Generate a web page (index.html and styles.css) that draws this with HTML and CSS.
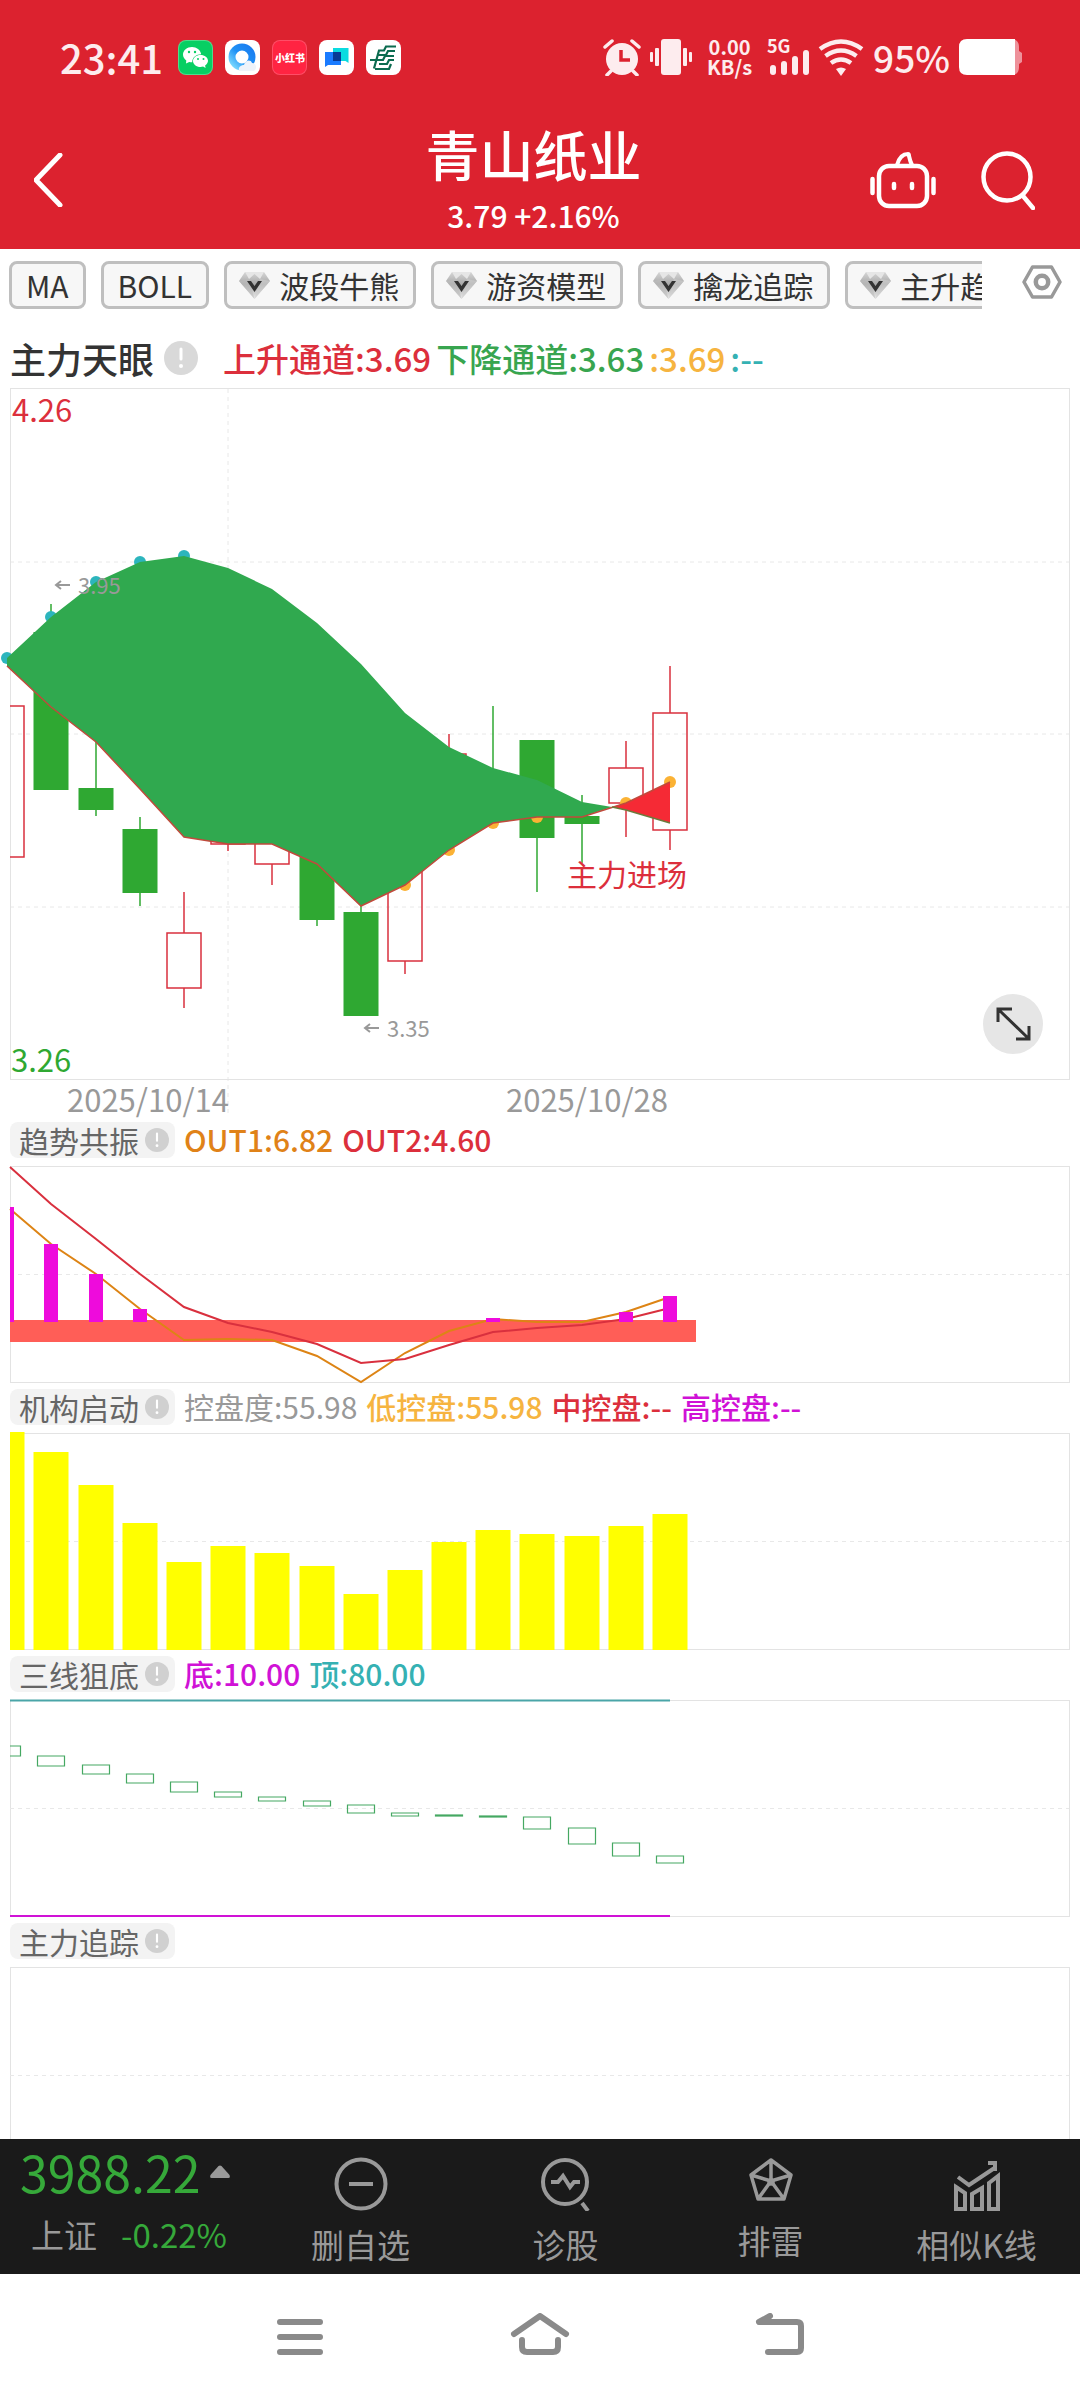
FILE: index.html
```html
<!DOCTYPE html>
<html lang="zh-CN">
<head>
<meta charset="utf-8">
<meta name="viewport" content="width=device-width, initial-scale=1">
<title>青山纸业</title>
<link rel="stylesheet" href="styles.css">
</head>
<body>
<svg class="defs" aria-hidden="true">
  <defs>
    <linearGradient id="gem-fill" x1="0" y1="0" x2="0" y2="1"><stop offset="0" stop-color="#d6d6d6"/><stop offset=".45" stop-color="#a9a9a9"/><stop offset="1" stop-color="#ececec"/></linearGradient>
    <linearGradient id="browser-ring" x1="0" y1="1" x2="1" y2="0"><stop offset="0" stop-color="#7fdcff"/><stop offset=".5" stop-color="#1e90f5"/><stop offset="1" stop-color="#1a7cf0"/></linearGradient>
    <symbol id="gem" viewBox="0 0 31 28">
      <path d="M6 1h19l6 9-15.500 18L0 10z" fill="url(#gem-fill)"/>
      <path d="M6 1h19l-4 7-5.500-5L10 8z" fill="#e6e6e6"/>
      <path d="M0 10l10-2 5.500 20z" fill="#bdbdbd" opacity=".6"/>
      <path d="M31 10l-10-2-5.500 20z" fill="#cfcfcf" opacity=".6"/>
      <path d="M8 10h4l3.500 5 3.500-5h4l-7.500 11z" fill="#333"/>
    </symbol>
    <symbol id="info" viewBox="0 0 34 34">
      <circle cx="17" cy="17" r="17" fill="currentColor"/>
      <path d="M17 8v10" stroke="#fff" stroke-width="3" stroke-linecap="round"/><circle cx="17" cy="25" r="2" fill="#fff"/>
    </symbol>
  </defs>
</svg>
<div class="app">
  <header class="top">
    <div class="status">
      <span class="clock">23:41</span>
      <div class="apps">
        <svg viewBox="0 0 35 35"><rect width="35" height="35" rx="8" fill="#4fdc8c"/><rect x="1" y="1" width="33" height="33" rx="7" fill="#07cf63"/><path d="M14 7c-5 0-9 3.400-9 7.600 0 2.500 1.300 4.500 3.300 5.900L8 23.500l3.200-1.600c1 .3 2 .4 3 .4 0-4.800 4-8 9-8-.8-4.300-4.600-7.300-9.200-7.300z" fill="#fff"/><path d="M22.500 15c-4.200 0-7.500 2.700-7.500 6s3.300 6 7.500 6c.9 0 1.800-.1 2.600-.4l2.500 1.300-.5-2.500c1.800-1.200 2.900-2.800 2.900-4.600 0-3.200-3.300-5.800-7.500-5.800z" fill="#fff"/><g fill="#07cf63"><circle cx="11" cy="12" r="1.200"/><circle cx="17" cy="12" r="1.200"/><circle cx="20" cy="19" r="1"/><circle cx="25.500" cy="19" r="1"/></g></svg>
        <svg viewBox="0 0 35 35"><rect width="35" height="35" rx="8" fill="#fff"/><circle cx="17" cy="17" r="10" fill="none" stroke="url(#browser-ring)" stroke-width="7"/><path d="M14 31c-1-4 2-6 5-6 1-5 7-6 8-2 5 0 5 6 2 8z" fill="#eef3fa"/></svg>
        <svg viewBox="0 0 35 35"><rect width="35" height="35" rx="8" fill="#ff4d67"/><rect x="1" y="1" width="33" height="33" rx="7" fill="#ff2442"/><text x="3" y="22" class="app-name">小红书</text></svg>
        <svg viewBox="0 0 35 35"><rect width="35" height="35" rx="8" fill="#fff"/><path d="M14 8h15.500v15l-3-2H14z" fill="#0adbe0"/><path d="M6 12h16v13H9l-3 2z" fill="#1a7bff"/><path d="M14 12h8v9h-8z" fill="#083a94"/></svg>
        <svg viewBox="0 0 35 35"><rect width="35" height="35" rx="8" fill="#fff"/><g fill="none" stroke="#0b6b4f" stroke-width="2.200"><path d="M30 6.500H20l-2 4h-5l-5 18M29 11h-7l-2 4h-8M4 20h13l2-4h9M28 20h-5l-2 4h-8M25 24l-2 5H9"/></g></svg>
      </div>
      <div class="signals">
        <svg width="38" height="37" viewBox="0 0 38 37"><circle cx="19" cy="20" r="16" fill="#fdecee"/><path d="M2 8l7-6M36 8l-7-6M8 32l-4 4M30 32l4 4" stroke="#fdecee" stroke-width="3.500" stroke-linecap="round"/><path d="M18 11v10h9" fill="none" stroke="#dc222f" stroke-width="3.500"/></svg>
        <svg width="42" height="36" viewBox="0 0 42 36" fill="#fdecee"><rect x="11" width="20" height="36" rx="3"/><rect x="5" y="9" width="4" height="18" rx="1"/><rect y="13" width="3" height="10" rx="1"/><rect x="33" y="9" width="4" height="18" rx="1"/><rect x="39" y="13" width="3" height="10" rx="1"/></svg>
        <span class="speed"><b>0.00</b><b>KB/s</b></span>
        <svg class="cell" width="42" height="36" viewBox="0 0 42 36" fill="#fdecee"><text x="0" y="14" class="net">5G</text><rect x="3" y="26" width="6" height="10" rx="3"/><rect x="14" y="22" width="6" height="14" rx="3"/><rect x="25" y="17" width="6" height="19" rx="3"/><rect x="36" y="11" width="6" height="25" rx="3"/></svg>
        <svg width="46" height="37" viewBox="0 0 46 37"><g fill="none" stroke="#fdecee" stroke-width="4.500"><path d="M2 10q21-15 42 0M7.500 17q15.500-11 31 0M13 24q10-7 20 0"/></g><path d="M18 30q5-3 10 0l-5 7z" fill="#fdecee"/></svg>
        <span class="percent">95%</span>
        <svg width="64" height="36" viewBox="0 0 64 36"><path d="M8 0h44q8 0 8 8v4l3 2v9l-3 2v3q0 8-8 8H8z" fill="#ee919a"/><path d="M8 0h48v36H8q-8 0-8-8V8q0-8 8-8z" fill="#fff"/></svg>
      </div>
    </div>
    <div class="titlebar">
      <button class="icon-btn back" aria-label="返回"><svg width="30" height="54" viewBox="0 0 30 54"><path d="M26 2L2 27l24 25" fill="none" stroke="#fff" stroke-width="5" stroke-linecap="round" stroke-linejoin="round"/></svg></button>
      <div class="heading">
        <h1>青山纸业</h1>
        <p>3.79 +2.16%</p>
      </div>
      <div class="tools">
        <button class="icon-btn" aria-label="助手"><svg width="66" height="58" viewBox="0 0 66 58" fill="none" stroke="#fff" stroke-width="4.500" stroke-linecap="round"><rect x="9" y="15" width="48" height="40" rx="10"/><path d="M2.500 28v14M63.500 28v14M24 33v4M42 33v4"/><path d="M27 14q3-11 11-11 1 0 1 2 1 5 3 9" stroke-width="4"/></svg></button>
        <button class="icon-btn" aria-label="搜索"><svg width="54" height="60" viewBox="0 0 54 60" fill="none" stroke="#fff" stroke-width="4.500" stroke-linecap="round"><circle cx="26" cy="27" r="23.500"/><path d="M42 46l10 12"/></svg></button>
      </div>
    </div>
  </header>

  <main class="content">
    <nav class="indicators">
      <div class="chips">
        <button class="chip">MA</button>
        <button class="chip">BOLL</button>
        <button class="chip"><svg><use href="#gem"/></svg>波段牛熊</button>
        <button class="chip"><svg><use href="#gem"/></svg>游资模型</button>
        <button class="chip"><svg><use href="#gem"/></svg>擒龙追踪</button>
        <button class="chip"><svg><use href="#gem"/></svg>主升趋势</button>
      </div>
      <button class="icon-btn settings" aria-label="设置"><svg width="40" height="34" viewBox="0 0 40 34" fill="none" stroke="#999" stroke-width="3.500"><path d="M10.500 2h19L38 17l-8.500 15h-19L2 17z" stroke-linejoin="round"/><circle cx="20" cy="17" r="6.200" stroke-width="4.500"/></svg></button>
    </nav>

    <section>
      <div class="main-head">
        <h2>主力天眼</h2>
        <svg class="info-lg"><use href="#info"/></svg>
        <span class="red">上升通道:3.69</span>
        <span class="green">下降通道:3.63</span>
        <span class="amber">:3.69</span>
        <span class="teal">:--</span>
      </div>
      <svg class="chart" viewBox="0 0 1080 734" id="price">
        <g class="grid"><path d="M10 174H1069M10 346H1069M10 519H1069M228 1V725"/></g>
        <rect class="frame" x="10.500" y="0.500" width="1059" height="691"/>
        <g class="plot"></g>
        <text x="12" y="34" class="axis up">4.26</text>
        <text x="11" y="684" class="axis down">3.26</text>
        <text x="78" y="206" class="mark">3.95</text>
        <text x="387" y="649" class="mark">3.35</text>
        <path class="arrow" d="M70 197H56m5-4l-5 4 5 4M379 640h-14m5-4l-5 4 5 4"/>
        <text x="567" y="498" class="signal">主力进场</text>
        <text x="67" y="724" class="axis date">2025/10/14</text>
        <text x="506" y="724" class="axis date">2025/10/28</text>
        <g class="expand"><circle cx="1013" cy="636" r="30" fill="#e6e6e6"/><path d="M998 634v-13h14M1016 651h13v-13M999 622l29 28" fill="none" stroke="#333" stroke-width="3"/></g>
      </svg>
    </section>

    <section class="sub">
      <div class="sub-head">
        <button class="pill">趋势共振<svg><use href="#info"/></svg></button>
        <span class="orange">OUT1:6.82</span><span class="red">OUT2:4.60</span>
      </div>
      <svg class="chart" viewBox="0 0 1080 220" id="trend"><rect class="frame" x="10.500" y="2.500" width="1059" height="216"/><path class="grid" d="M10 110.500H1069"/><g class="plot"></g></svg>
    </section>
    <section class="sub">
      <div class="sub-head">
        <button class="pill">机构启动<svg><use href="#info"/></svg></button>
        <span class="gray">控盘度:55.98</span><span class="amber">低控盘:55.98</span><span class="red">中控盘:--</span><span class="magenta">高控盘:--</span>
      </div>
      <svg class="chart" viewBox="0 0 1080 220" id="control"><rect class="frame" x="10.500" y="2.500" width="1059" height="216"/><path class="grid" d="M10 110.500H1069"/><g class="plot"></g></svg>
    </section>
    <section class="sub">
      <div class="sub-head">
        <button class="pill">三线狙底<svg><use href="#info"/></svg></button>
        <span class="magenta">底:10.00</span><span class="teal">顶:80.00</span>
      </div>
      <svg class="chart" viewBox="0 0 1080 220" id="bottom"><rect class="frame" x="10.500" y="2.500" width="1059" height="216"/><path class="grid" d="M10 110.500H1069"/><g class="plot"></g></svg>
    </section>
    <section class="sub">
      <div class="sub-head">
        <button class="pill">主力追踪<svg><use href="#info"/></svg></button>
      </div>
      <svg class="chart" viewBox="0 0 1080 220"><rect class="frame" x="10.500" y="2.500" width="1059" height="216"/><path class="grid" d="M10 110.500H1069"/></svg>
    </section>
  </main>

  <footer class="actions">
    <div class="index">
      <div class="index-value">3988.22<svg width="20" height="13" viewBox="0 0 20 13"><path d="M8.500 1q1.500-1 3 0l8 9q1 3-1 3h-17q-2 0-1-3z" fill="#999"/></svg></div>
      <div class="index-change"><span>上证</span><span class="down">-0.22%</span></div>
    </div>
    <button class="action"><svg width="54" height="54" viewBox="0 0 54 54" fill="none" stroke="#999" stroke-width="4"><circle cx="27" cy="27" r="24.500"/><path d="M15 27h24"/></svg>删自选</button>
    <button class="action"><svg width="54" height="54" viewBox="0 0 54 54" fill="none" stroke="#999" stroke-width="4"><circle cx="26" cy="25" r="22"/><path d="M12 25h7l5-6 7 11 4-5h6M43 46l6 8"/></svg>诊股</button>
    <button class="action"><svg width="54" height="50" viewBox="0 0 54 50" fill="none" stroke="#999" stroke-width="3.500" stroke-linejoin="round"><path d="M27 3L47 18l-7 24H14L7 18zM27 3v21L47 18M27 24l13 18M27 24L14 42M27 24L7 18"/><circle cx="27" cy="25" r="2"/></svg>排雷</button>
    <button class="action"><svg width="54" height="54" viewBox="0 0 54 54" fill="none" stroke="#999" stroke-width="4"><path d="M6 30l9 6v16H6zM22 37l10-6v21H22zM39 26l9-7v33h-9z"/><path d="M8 20l11 8 27-18M38 6h7v8"/></svg>相似K线</button>
  </footer>
  <nav class="system">
    <button aria-label="菜单"><svg width="60" height="48" viewBox="0 0 60 48"><path d="M10 9h40M10 24h40M10 39h40"/></svg></button>
    <button aria-label="主页"><svg width="60" height="48" viewBox="0 0 60 48"><path d="M4 21L30 3l26 18M12 27v7q0 5 5 5h26q5 0 5-5v-7"/></svg></button>
    <button aria-label="后退"><svg width="60" height="48" viewBox="0 0 60 48"><path d="M20 3L9 9h38q4 0 4 4v22q0 4-4 4H18"/></svg></button>
  </nav>
</div>
<script src="charts.js"></script>
</body>
</html>
```

FILE: styles.css
```css
* { box-sizing: border-box; }
body {
  margin: 0;
  background: #fff;
  color: #333;
  font-family: "Noto Sans CJK SC", "Noto Sans", sans-serif;
  font-size: 30px;
}
button {
  margin: 0;
  padding: 0;
  border: 0;
  background: none;
  color: inherit;
  font: inherit;
}
h1, h2, p { margin: 0; font-weight: 500; }
svg { display: block; flex: none; }
.defs { position: absolute; width: 0; height: 0; }

.app { display: flex; flex-direction: column; height: 100vh; }

.top { background: #dc222f; color: #fff; flex: none; }
.status {
  display: flex;
  align-items: center;
  height: 75px;
  padding: 39px 57px 0 60px;
  color: #fdecee;
}
.clock { font-size: 40px; line-height: 36px; font-weight: 500; width: 118px; }
.apps { display: flex; gap: 12px; }
.apps svg { width: 35px; height: 35px; }
.app-name { font-size: 10px; font-weight: 900; fill: #fff; }
.signals { display: flex; align-items: center; gap: 9px; margin-left: auto; }
.speed {
  display: flex;
  flex-direction: column;
  align-items: center;
  margin: 0 6px;
  font-size: 20px;
  line-height: 20px;
}
.cell { overflow: visible; }
.net { font-size: 18px; font-weight: 700; }
.percent { font-size: 37px; line-height: 36px; font-weight: 500; }

.titlebar {
  display: flex;
  justify-content: space-between;
  align-items: center;
  padding: 32px 45px 0 34px;
  height: 174px;
}
.icon-btn { display: block; }
.back { width: 163px; padding-top: 4px; }
.heading { text-align: center; padding-top: 4px; }
h1 { font-size: 54px; line-height: 70px; }
.heading p { font-size: 30px; line-height: 52px; }
.tools { display: flex; align-items: center; gap: 45px; padding-top: 4px; }

.content { flex: 1; min-height: 0; overflow-y: auto; scrollbar-width: none; }
.content::-webkit-scrollbar { display: none; }

.indicators { display: flex; padding: 12px 18px 0 9px; }
.chips { display: flex; flex: 1; min-width: 0; gap: 15px; overflow: hidden; }
.chip {
  display: flex;
  align-items: center;
  flex: none;
  gap: 9px;
  height: 48px;
  padding: 0 14px;
  border: 3px solid #bfbfbf;
  border-radius: 8px;
  background: #f7f7f7;
  line-height: 40px;
  white-space: nowrap;
}
.chip svg { width: 31px; height: 28px; margin-left: -2px; }
.settings { flex: none; margin-left: 40px; padding-bottom: 6px; }

.main-head {
  display: flex;
  align-items: center;
  height: 54px;
  margin: 22px 0 3px;
  padding-left: 10px;
  font-size: 33px;
  font-weight: 500;
  white-space: nowrap;
}
h2 { font-size: 36px; }
.info-lg { width: 34px; height: 34px; margin: 0 25px 0 10px; color: #d9d9d9; }
.main-head span { margin-right: 5px; }

.chart { width: 100%; height: auto; }
.frame { fill: none; stroke: #e3e3e3; }
.grid { fill: none; stroke: #e8e8e8; stroke-width: 1; stroke-dasharray: 4 4; }
.axis { font-size: 31px; }
.up, .signal { fill: #dc2f3c; }
.down { fill: #2fa832; color: #36a93a; }
.date { fill: #999; }
.mark { font-size: 22px; fill: #999; }
.arrow { fill: none; stroke: #999; stroke-width: 2; }
.signal { font-size: 30px; }

.sub { margin-bottom: 5px; }
.sub-head {
  display: flex;
  align-items: center;
  gap: 9px;
  height: 36px;
  margin-bottom: 6px;
  padding-left: 10px;
  line-height: 34px;
  font-weight: 500;
  white-space: nowrap;
}
.sub-head span { height: 36px; }
.pill {
  display: flex;
  align-items: center;
  gap: 6px;
  height: 36px;
  padding: 0 6px 0 9px;
  border-radius: 8px;
  background: #f3f3f3;
  color: #666;
  font-weight: 400;
}
.pill svg { width: 24px; height: 24px; color: #d0d0d0; }
.red { color: #dc2f3c; }
.green { color: #38a54f; }
.amber { color: #f6b440; }
.teal { color: #35b1b3; }
.orange { color: #e08218; }
.gray { color: #999; font-weight: 400; }
.magenta { color: #d012d6; }

.actions {
  display: grid;
  grid-template-columns: 258fr 205fr 205fr 205fr 207fr;
  flex: none;
  height: 135px;
  background: #1a1a1a;
  color: #999;
  font-size: 33px;
}
.index { padding: 2px 0 0 20px; }
.index-value {
  display: flex;
  align-items: center;
  gap: 10px;
  color: #36a93a;
  font-size: 50px;
  line-height: 60px;
}
.index-change { display: flex; gap: 24px; padding-left: 11px; line-height: 66px; }
.action {
  display: flex;
  flex-direction: column;
  align-items: center;
  justify-content: flex-start;
  padding-top: 18px;
  line-height: 66px;
}

.system {
  display: flex;
  justify-content: center;
  flex: none;
  height: 126px;
}
.system button { display: flex; justify-content: center; align-items: center; width: 240px; }
.system path {
  fill: none;
  stroke: #8a8a8a;
  stroke-width: 6;
  stroke-linecap: round;
  stroke-linejoin: round;
}
```

FILE: charts.js
```javascript
const STEP = 44.18;
const LEFT = 10;
const x = i => Math.round(7.3 + STEP * i);
const plot = id => document.querySelector('#' + id + ' .plot');
const bar = (i, w, top, bottom, attrs) => {
  const x0 = Math.max(LEFT, x(i) - w / 2);
  return `<rect x="${x0}" y="${top}" width="${x(i) + w / 2 - x0}" height="${bottom - top}" ${attrs}/>`;
};
// Outlined box; the side that falls outside the frame is left open.
const box = (i, w, top, bottom, color, sw) => {
  const r = x(i) + w / 2, l = x(i) - w / 2;
  const d = l < LEFT ? `M${LEFT} ${top}H${r}V${bottom}H${LEFT}` : `M${l} ${top}H${r}V${bottom}H${l}Z`;
  return `<path d="${d}" fill="none" stroke="${color}" stroke-width="${sw}"/>`;
};
const points = ys => ys.map((y, i) => `${x(i)},${y}`);
const line = (pts, color, w) => `<polyline points="${pts.join(' ')}" fill="none" stroke="${color}" stroke-width="${w}"/>`;

// Price: candles are [up?, high, body top, body bottom, low].
const candles = [
  [1, 318, 318, 469, 469], [0, 216, 244, 402, 402], [0, 300, 400, 422, 428], [0, 429, 441, 505, 518],
  [1, 504, 545, 600, 620], [1, 440, 448, 456, 463], [1, 440, 440, 476, 497], [0, 440, 440, 532, 538],
  [0, 518, 524, 628, 628], [1, 480, 480, 573, 586], [1, 346, 366, 440, 440], [0, 318, 400, 430, 430],
  [0, 352, 352, 450, 504], [0, 407, 428, 436, 475], [1, 353, 380, 415, 449], [1, 278, 325, 442, 462]
];
const upper = [270, 229, 194, 174, 168, 180, 201, 235, 276, 325, 359, 380, 392, 414, 422, 435];
const lower = [278, 319, 354, 401, 449, 456, 456, 476, 518, 497, 462, 435, 429, 429, 415, 394];
const cross = '612,419';

let out = candles.map(([up, high, top, bottom, low], i) => {
  const color = up ? '#d9303e' : '#2fa832';
  const body = up ? box(i, 34, top, bottom, color, 1.5) : bar(i, 35, top, bottom, `fill="${color}"`);
  const wick = x(i) < LEFT ? '' : `<path d="M${x(i)} ${high}V${top}M${x(i)} ${bottom}V${low}" stroke="${color}" stroke-width="1.500"/>`;
  return body + wick;
}).join('');
for (let i = 0; i < 5; i++) out += `<circle cx="${x(i)}" cy="${upper[i]}" r="6" fill="#2cb5bd"/>`;
for (const i of [9, 10, 11, 12, 14, 15]) out += `<circle cx="${x(i)}" cy="${lower[i]}" r="6" fill="#fbb234"/>`;
const up = points(upper), lo = points(lower);
out += `<polygon points="${[...up.slice(0, 14), cross, ...lo.slice(0, 14).reverse()].join(' ')}" fill="#30a94f"/>`;
out += `<polygon points="${[cross, ...lo.slice(14), ...up.slice(14).reverse()].join(' ')}" fill="#f52a35"/>`;
out += line(lo, '#c04a3c', 1.5) + line([cross, ...up.slice(14)], '#6d7a3c', 1.5);
plot('price').innerHTML = out;

// Trend resonance
const fast = [42, 80, 110, 145, 176, 175, 176, 192, 218, 189, 167, 155, 158, 158, 148, 133];
const slow = [0, 40, 75, 110, 143, 159, 168, 180, 199, 195, 181, 168, 164, 161, 155, 144];
const inFrame = pts => [`${LEFT},${+pts[0].split(',')[1] + 3}`, ...pts.slice(1)];
plot('trend').innerHTML =
  '<rect x="10" y="156" width="686" height="22" fill="#ff5e57"/>' +
  line(inFrame(points(fast)), '#dd8415', 2) + line(inFrame(points(slow)), '#d9303e', 2) +
  [[0, 43], [1, 80], [2, 110], [3, 145], [11, 154], [14, 148], [15, 132]]
    .map(([i, top]) => bar(i, 14, top, 158, 'fill="#ee0bdc"')).join('');

// Control degree
plot('control').innerHTML = [1, 21, 54, 92, 131, 115, 122, 135, 163, 139, 111, 99, 103, 105, 95, 83]
  .map((top, i) => bar(i, 35, top, 219, 'fill="#ff0"')).join('');

// Three-line bottom
plot('bottom').innerHTML = [
  [48, 58], [58, 68], [67, 76], [76, 85], [84, 94], [94, 99], [99, 103], [103, 108],
  [107, 115], [115, 118], [117, 118], [118, 119], [119, 131], [130, 146], [145, 158], [158, 165]
].map(([top, bottom], i) => box(i, 27, top, bottom, '#45a862', 1.2)).join('') +
  '<path d="M10 2.500H670" stroke="#4aa5a8" stroke-width="2"/><path d="M10 218H670" stroke="#d012d6" stroke-width="2"/>';
```
